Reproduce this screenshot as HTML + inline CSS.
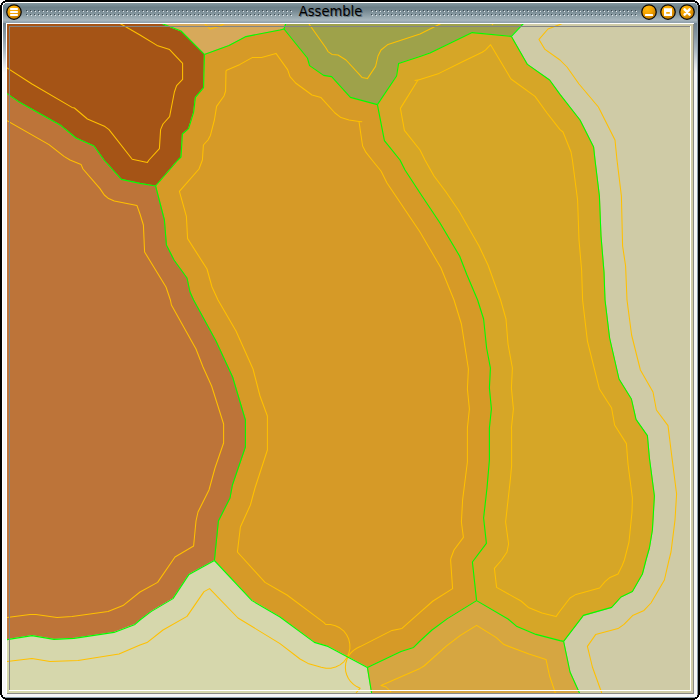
<!DOCTYPE html>
<html>
<head>
<meta charset="utf-8">
<title>Assemble</title>
<style>
html,body{margin:0;padding:0;background:#fff;}
body{width:700px;height:700px;overflow:hidden;position:relative;font-family:"DejaVu Sans","Liberation Sans",sans-serif;}
.win{position:absolute;left:0;top:0;width:700px;height:700px;background:#000;}
.abs{position:absolute;}
.map{position:absolute;left:0;top:0;}
.title{position:absolute;left:0;top:0.4px;width:661px;height:22px;line-height:22px;text-align:center;font-family:"DejaVu Sans Condensed","DejaVu Sans","Liberation Sans",sans-serif;font-size:14.4px;color:#000;text-shadow:1px 1px 0.5px rgba(30,40,50,.45);white-space:nowrap;transform:scale(1.012,1.0);transform-origin:330.5px 11px;}
</style>
</head>
<body>
<div class="win">
  <!-- outer light edge -->
  <div class="abs" style="left:2px;top:2px;width:696px;height:696px;background:#fff;"></div>
  <!-- title bar -->
  <div class="abs" style="left:3px;top:3px;width:694px;height:20px;background:linear-gradient(to bottom,#869aa1 0%,#7b8f98 8%,#6c8089 22%,#73868f 35%,#8799a1 55%,#9dadb4 75%,#a9b7be 86%,#98a8b2 93%,#8e9fab 100%);"></div>
  <!-- side borders -->
  <div class="abs" style="left:3px;top:23px;width:3px;height:674px;background:#f6f6f7;"></div>
  <div class="abs" style="left:694px;top:23px;width:3px;height:674px;background:#f6f6f7;"></div>
  <div class="abs" style="left:3px;top:694px;width:694px;height:3px;background:#f6f6f7;"></div>
  <div class="abs" style="left:3px;top:23px;width:3px;height:50px;background:linear-gradient(to bottom,#6f828e 0%,#8a9ba6 28%,#adbac3 55%,#dce1e5 82%,#f6f6f7 100%);"></div>
  <div class="abs" style="left:694px;top:23px;width:3px;height:50px;background:linear-gradient(to bottom,#6f828e 0%,#8a9ba6 28%,#adbac3 55%,#dce1e5 82%,#f6f6f7 100%);"></div>
  <div class="abs" style="left:697px;top:3px;width:1px;height:695px;background:#8d9eaa;"></div>
  <div class="abs" style="left:3px;top:697px;width:695px;height:1px;background:#8d9eaa;"></div>
  <div class="abs" style="left:6px;top:23px;width:688px;height:1px;background:#fff;"></div>
  <div class="abs" style="left:693px;top:24px;width:1px;height:670px;background:#8a8a86;"></div>
  <div class="abs" style="left:7px;top:693px;width:687px;height:1px;background:#8a8a86;"></div>
  <svg class="map" width="700" height="700" viewBox="0 0 700 700">
<defs><clipPath id="c"><rect x="7" y="24" width="686" height="669"/></clipPath></defs>
<g clip-path="url(#c)">
<g>
<polygon fill="#a55416" stroke="#a55416" stroke-width="1" points="4,20 158,20 163,24 181,31 204.4,54.4 203.6,87.6 195.4,97.4 193.6,112.4 188.6,128.6 182.4,134 181,157 178,160 155.6,186 140,183.4 121.4,179.4 104,160 94,146 76,138 61,125.6 20,102.6 7,93.6 4,91.6"/>
<polygon fill="#d7a95a" stroke="#d7a95a" stroke-width="1" points="158,20 163,24 181,31 204.4,54.4 229,45.6 246,36.6 280,30 284,29 285.6,24 286.5,20"/>
<polygon fill="#9ea24a" stroke="#9ea24a" stroke-width="1" points="286.5,20 285.6,24 284,29 307.4,58 309.6,65.6 323.6,75.4 331.6,76.6 350.4,97.4 377.4,104.6 396.6,76 398.6,63.4 420,56.4 430,53 472.2,32.6 511.4,36.4 523,24 527,20"/>
<polygon fill="#cfcba6" stroke="#cfcba6" stroke-width="1" points="527,20 523,24 511.4,36.4 527.4,64.4 549.6,80 560,94.4 580,120 593.6,147 595,160 599.4,196 601,236 604,272 605,300 609.6,338 619,379 631.4,399 636,419.4 647.4,435.6 649.4,458 654.4,496 652.4,530 649.4,548 646,560 642.4,574 632.4,591.4 621,597 611.6,607.4 583.4,615.4 563.6,641.4 570,672 579,692 581,696 696,696 696,20"/>
<polygon fill="#d6a627" stroke="#d6a627" stroke-width="1" points="377.4,104.6 396.6,76 398.6,63.4 420,56.4 430,53 472.2,32.6 511.4,36.4 527.4,64.4 549.6,80 560,94.4 580,120 593.6,147 595,160 599.4,196 601,236 604,272 605,300 609.6,338 619,379 631.4,399 636,419.4 647.4,435.6 649.4,458 654.4,496 652.4,530 649.4,548 646,560 642.4,574 632.4,591.4 621,597 611.6,607.4 583.4,615.4 563.6,641.4 560,640.6 536,634.4 517,626.6 508,619 476.6,600.6 472.4,562 486.4,543.4 483.6,518 487,488 489.4,460 489.4,428 491.4,409 489.4,388 490.4,368 486.6,348 483.6,319 477.6,300 467,275 459.6,256 440,223 420,193 405,170 400,160 384.4,140.6 377.4,104.6"/>
<polygon fill="#d69a27" stroke="#d69a27" stroke-width="1" points="204.4,54.4 229,45.6 246,36.6 280,30 284,29 307.4,58 309.6,65.6 323.6,75.4 331.6,76.6 350.4,97.4 377.4,104.6 384.4,140.6 400,160 405,170 420,193 440,223 459.6,256 467,275 477.6,300 483.6,319 486.6,348 490.4,368 489.4,388 491.4,409 489.4,428 489.4,460 487,488 483.6,518 486.4,543.4 472.4,562 476.6,600.6 447.4,618.6 432,630 420,641 413.6,647.4 401,651.4 367.4,667.4 328,646.4 314.4,642.4 280,617 252,600.6 214.4,560.5 218.4,521 230,498 232.4,485 245.4,447 245.4,420 232.6,377 216,341 193.6,300 190,292 187,278 174,260 166.4,245 164.4,220 155.6,186 178,160 181,157 182.4,134 188.6,128.6 193.6,112.4 195.4,97.4 203.6,87.6 204.4,54.4"/>
<polygon fill="#bd7439" stroke="#bd7439" stroke-width="1" points="4,91.6 7,93.6 20,102.6 61,125.6 76,138 94,146 104,160 121.4,179.4 140,183.4 155.6,186 164.4,220 166.4,245 174,260 187,278 190,292 193.6,300 216,341 232.6,377 245.4,420 245.4,447 232.4,485 230,498 218.4,521 214.4,560.5 189,574.4 173,598.6 151,611.6 140,620 135,624.4 114,632.4 74,638.4 54,639.4 32,635.6 7,639.6 4,640"/>
<polygon fill="#d6d7ac" stroke="#d6d7ac" stroke-width="1" points="4,640 7,639.6 32,635.6 54,639.4 74,638.4 114,632.4 135,624.4 140,620 151,611.6 173,598.6 189,574.4 214.4,560.5 252,600.6 280,617 314.4,642.4 328,646.4 367.4,667.4 371.6,693 372,696 4,696"/>
<polygon fill="#d6a641" stroke="#d6a641" stroke-width="1" points="367.4,667.4 401,651.4 413.6,647.4 420,641 432,630 447.4,618.6 476.6,600.6 508,619 517,626.6 536,634.4 560,640.6 563.6,641.4 570,672 579,692 581,696 372,696 371.6,693"/>
</g>
<g fill="none" stroke="#ffc000" stroke-width="1.05" stroke-linejoin="round">
<polyline points="117.5,22 121,24 140,35 157,45.4 169.6,49.6 182.6,63.4 182.6,79.4 176.6,85.6 174.4,92 169.6,116.6 163,124 160.6,129.6 159.4,148.6 149,160 147.4,162.4 132.2,159.3 109,129.6 105,126.6 87.4,119 74.4,108 72,107.4 32,84 7,68 4,66"/>
<polyline points="4,119 7,120.6 49,144.6 64,156.4 70,160 81,164.4 83,169 100,188.6 104.3,195 108.6,198.6 114.3,201.1 137,205.6 140,214 143.4,225 144.6,252 166,287 170.4,300 171.4,305 196,349 203,367 211.6,386 223.6,424 223.6,443 215,468 209,490 198,512 196,521 193.6,546 175,557 157.6,582.4 140,592 123,605.6 108,611.6 72,616.4 57,617.6 36,614.4 30,614.4 7,617.6 4,618"/>
<polyline points="226,70.4 240,64.4 252.6,57.4 261.6,57.4 276,53.4 280,59 287.6,69.6 290,76.6 295.6,83 312,95 321,97.6 335,113 341,117.6 349,120 359,121.6 362.6,146 366,152.4 372,160 381,171 387,183 420,232 441,268 454,300 461.4,324 468.4,369 467.4,389 469.4,409 467.4,428 467.4,462 462.6,500 461.4,522 463.4,537.4 454,550 451,558 450.6,560 452.6,588.6 433,601 420,612.4 402,628.4 392,630.4 360.2,646.6 356.7,648.2 353.5,650.4 350.7,653.1 348.4,656.3 346.8,659.8 345.7,663.5 345.4,667.4 345.7,671.3 346.8,675 348.4,678.5 350.7,681.7 353.5,684.4 356.7,686.6 360.2,688.2 356,693"/>
<polyline points="226,70.4 225.6,91 224,96 216.6,106.4 214.4,120 210.4,135.4 208,140 203.4,145 202.4,160 199,169 179.4,191.4 186.4,216.4 187.6,238.6 207,269 212,287 218,300 236,331 253,369 260,396 267.4,416 267.4,450 255,488 250.4,505 240.4,527 237.4,552 265,582.4 280,591 287,595 324,622.6 325.7,624.5 330.6,624.6 335.3,625.7 339.7,627.8 343.6,630.8 346.6,634.7 348.7,639.1 349.8,643.8 349.9,648.7 348.8,653.5 346.8,657.9 343.8,661.8 340,664.9 335.6,667 330.9,668.2 326,668.3 321.2,667.3 308,663.4 300,659 280,643.6 238,618 209.6,588.6 204,591.6 187,616.4 163,630 147,642.6 140,645 119,654 78,660.4 50,661.6 32,658.4 7,661.6 4,662"/>
<polyline points="307.5,22 309,24 326,48 328,51.6 332,54.4 338,55 346,60 362,77.4 367.4,78.6 375.6,66.4 378,56 381,50 388,44.4 420,34 440,24 444,22"/>
<polyline points="418,80 420,79.4 439,73.4 464,61 482.2,52.3 485.4,50.1 490.6,44.7 511,79 535,96.4 547,113 560,129.6 563,132 571,152 572.4,160 577.6,200 579,240 581.6,270 582.6,300 587.4,341 599.4,389 611.6,408 614.6,425 626.4,443.6 628,464 632.4,498 632,512 629,542 624.4,560 622,566 618,574 610,577.4 605,581.6 599.6,588 576,594.4 570,598 560,611 556,616.6 542,613 528.4,607.4 521,601 496.6,587.4 494.4,568.4 501.6,560 507,552 508.6,544 505.6,522 510.4,479 511.6,466 511.6,430 511.4,428 513.4,409 511.4,388 512.4,368 508,344 506,319 500.6,300 488,265 479,246 459,211 446,192 434,176 425,160 420,150 404.4,130.4 400.4,108.4 418,80"/>
<polyline points="566,22 560,24.4 548,29 539,39.4 545,49.4 560,60 567,67 579,84 598.4,107 615,140 617,160 621.4,196 622.6,246 625.6,266 627,300 631.6,335 640.4,370 653,392 656.4,410 668,425.6 671,450 676.6,494 675,520 671,552 669,560 664.4,580 651,603 644,610.4 632.6,615.6 624,624.4 618,628.6 595.6,634.6 587.4,646.4 592.4,667 601.4,692 602,694"/>
<polyline points="391,692 386,687 381,685.6 420,668.4 424,666 446,646.4 460,635.6 476.6,625.4 496,637.4 504,644.6 529,654 546,659.4 549.6,676 555,692 556,694"/>
<polyline points="203,22 205,24 210,29 217,27 223,24.4 227,22"/>
<polyline points="491.3,22.5 492.5,24.6 493.7,22.5"/>
<polyline points="358.8,121.6 362.2,121.8"/>
<polyline points="414.6,80.4 418,80"/>
</g>
<g fill="none" stroke="#00ff00" stroke-width="1.1" stroke-linejoin="round">
<polyline points="158,20 163,24 181,31 204.4,54.4"/>
<polyline points="204.4,54.4 229,45.6 246,36.6 280,30 284,29"/>
<polyline points="284,29 285.6,24 286.5,20"/>
<polyline points="284,29 307.4,58 309.6,65.6 323.6,75.4 331.6,76.6 350.4,97.4 377.4,104.6"/>
<polyline points="377.4,104.6 396.6,76 398.6,63.4 420,56.4 430,53 472.2,32.6 511.4,36.4"/>
<polyline points="511.4,36.4 523,24 527,20"/>
<polyline points="511.4,36.4 527.4,64.4 549.6,80 560,94.4 580,120 593.6,147 595,160 599.4,196 601,236 604,272 605,300 609.6,338 619,379 631.4,399 636,419.4 647.4,435.6 649.4,458 654.4,496 652.4,530 649.4,548 646,560 642.4,574 632.4,591.4 621,597 611.6,607.4 583.4,615.4 563.6,641.4"/>
<polyline points="563.6,641.4 570,672 579,692 581,696"/>
<polyline points="476.6,600.6 508,619 517,626.6 536,634.4 560,640.6 563.6,641.4"/>
<polyline points="367.4,667.4 401,651.4 413.6,647.4 420,641 432,630 447.4,618.6 476.6,600.6"/>
<polyline points="367.4,667.4 371.6,693 372,696"/>
<polyline points="377.4,104.6 384.4,140.6 400,160 405,170 420,193 440,223 459.6,256 467,275 477.6,300 483.6,319 486.6,348 490.4,368 489.4,388 491.4,409 489.4,428 489.4,460 487,488 483.6,518 486.4,543.4 472.4,562 476.6,600.6"/>
<polyline points="204.4,54.4 203.6,87.6 195.4,97.4 193.6,112.4 188.6,128.6 182.4,134 181,157 178,160 155.6,186"/>
<polyline points="4,91.6 7,93.6 20,102.6 61,125.6 76,138 94,146 104,160 121.4,179.4 140,183.4 155.6,186"/>
<polyline points="155.6,186 164.4,220 166.4,245 174,260 187,278 190,292 193.6,300 216,341 232.6,377 245.4,420 245.4,447 232.4,485 230,498 218.4,521 214.4,560.5"/>
<polyline points="4,640 7,639.6 32,635.6 54,639.4 74,638.4 114,632.4 135,624.4 140,620 151,611.6 173,598.6 189,574.4 214.4,560.5"/>
<polyline points="214.4,560.5 252,600.6 280,617 314.4,642.4 328,646.4 367.4,667.4"/>
</g>
</g>
</svg>
  <!-- sunken frame -->
  <div class="abs" style="left:9px;top:26px;width:682px;height:1px;background:#848484;"></div>
  <div class="abs" style="left:9px;top:26px;width:1px;height:665px;background:#848484;"></div>
  <div class="abs" style="left:690px;top:26px;width:1px;height:665px;background:#fff;"></div>
  <div class="abs" style="left:9px;top:690px;width:682px;height:1px;background:#fff;"></div>
  <!-- title bar grips -->
  <svg class="abs" style="left:0;top:0" width="700" height="24" viewBox="0 0 700 24">
    <defs>
      <pattern id="grip" x="26" y="10" width="4" height="4" patternUnits="userSpaceOnUse">
        <rect x="0" y="0" width="1" height="1" fill="#3e4c53"/>
        <rect x="1" y="1" width="1" height="1" fill="#e4e9ec"/>
      </pattern>
      <pattern id="grip2" x="371" y="10" width="4" height="4" patternUnits="userSpaceOnUse">
        <rect x="0" y="0" width="1" height="1" fill="#3e4c53"/>
        <rect x="1" y="1" width="1" height="1" fill="#e4e9ec"/>
      </pattern>
    </defs>
    <rect x="26" y="10" width="266" height="6" fill="url(#grip)" shape-rendering="crispEdges"/>
    <rect x="371" y="10" width="266" height="6" fill="url(#grip2)" shape-rendering="crispEdges"/>
  </svg>
  <div class="title">Assemble</div>
  <!-- buttons -->
  <svg class="abs" style="left:0;top:0" width="700" height="24" viewBox="0 0 700 24">
    <defs>
      <radialGradient id="bg" cx="0.38" cy="0.3" r="0.75">
        <stop offset="0" stop-color="#ffb910"/>
        <stop offset="0.45" stop-color="#f6a400"/>
        <stop offset="1" stop-color="#b87400"/>
      </radialGradient>
    </defs>
    <g fill="url(#bg)" stroke="#0a0a0a" stroke-width="1.25">
      <circle cx="14" cy="12" r="7.25"/>
      <circle cx="649" cy="12" r="7.25"/>
      <circle cx="668" cy="12" r="7.25"/>
      <circle cx="687" cy="12" r="7.25"/>
    </g>
    <g fill="#fff">
      <rect x="10" y="8" width="8" height="2" rx="0.8"/>
      <rect x="10" y="11" width="8" height="2" rx="0.8"/>
      <rect x="10" y="14" width="8" height="2" rx="0.8"/>
      <rect x="645" y="14" width="8" height="2" rx="0.6"/>
      <path d="M664 8.2h8v7.8h-8z M666.2 12v1.7h3.6v-1.7z" fill-rule="evenodd"/>
    </g>
    <path d="M684.6 9.4 L689.6 14.6 M689.6 9.4 L684.6 14.6" stroke="#fff" stroke-width="2.5" stroke-linecap="round" fill="none"/>
  </svg>
  <!-- rounded corners -->
  <svg class="abs" style="left:0;top:0" width="700" height="700" viewBox="0 0 700 700" shape-rendering="crispEdges">
    <g id="tl">
      <path d="M2 2h4v1h-2v1h-1v2h-1z" fill="#000"/>
      <path d="M5 2h1v1h-1z M3 3h2v1h-1v1h-1z M2 5h1v1h-1z" fill="#fff"/>
      <path d="M0 0h5v1h-2v1h-1v1h-1v2h-1z" fill="#fff"/>
    </g>
    <g transform="translate(700,0) scale(-1,1)">
      <path d="M2 2h4v1h-2v1h-1v2h-1z" fill="#000"/>
      <path d="M5 2h1v1h-1z" fill="#fff"/>
      <path d="M3 3h2v1h-1v1h-1z M2 5h1v1h-1z" fill="#b0bcc4"/>
      <path d="M0 0h5v1h-2v1h-1v1h-1v2h-1z" fill="#fff"/>
    </g>
    <g transform="translate(0,700) scale(1,-1)">
      <path d="M2 2h3v1h-2v2h-1z" fill="#000"/>
      <path d="M0 0h5v1h-2v1h-1v1h-1v2h-1z" fill="#fff"/>
    </g>
    <g transform="translate(700,700) scale(-1,-1)">
      <path d="M2 2h3v1h-2v2h-1z" fill="#000"/>
      <path d="M0 0h5v1h-2v1h-1v1h-1v2h-1z" fill="#fff"/>
    </g>
  </svg>
</div>
</body>
</html>
